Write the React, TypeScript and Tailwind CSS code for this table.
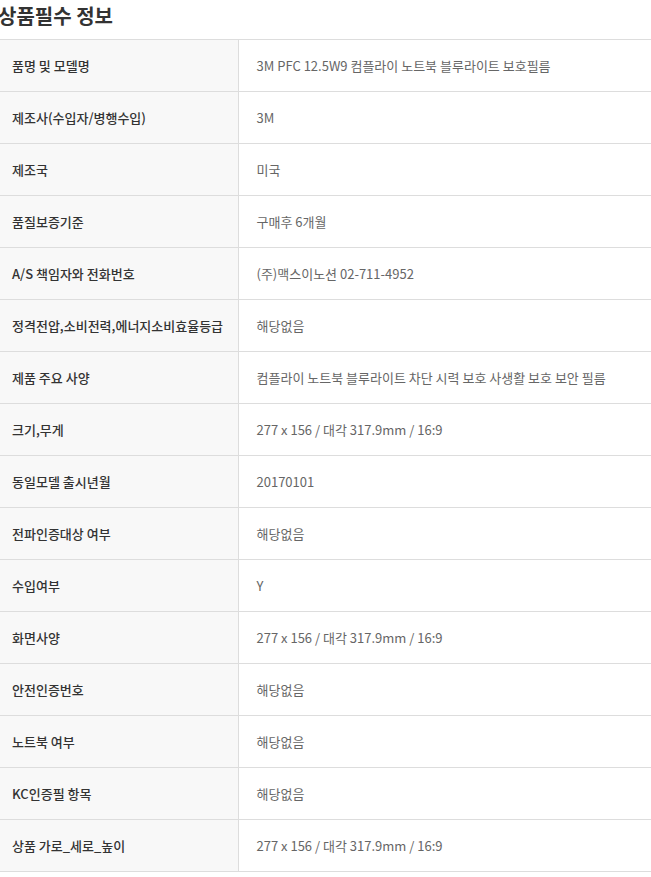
const rows: [string, string][] = [
  ['품명 및 모델명', '3M PFC 12.5W9 컴플라이 노트북 블루라이트 보호필름'],
  ['제조사(수입자/병행수입)', '3M'],
  ['제조국', '미국'],
  ['품질보증기준', '구매후 6개월'],
  ['A/S 책임자와 전화번호', '(주)맥스이노션 02-711-4952'],
  ['정격전압,소비전력,에너지소비효율등급', '해당없음'],
  ['제품 주요 사양', '컴플라이 노트북 블루라이트 차단 시력 보호 사생활 보호 보안 필름'],
  ['크기,무게', '277 x 156 / 대각 317.9mm / 16:9'],
  ['동일모델 출시년월', '20170101'],
  ['전파인증대상 여부', '해당없음'],
  ['수입여부', 'Y'],
  ['화면사양', '277 x 156 / 대각 317.9mm / 16:9'],
  ['안전인증번호', '해당없음'],
  ['노트북 여부', '해당없음'],
  ['KC인증필 항목', '해당없음'],
  ['상품 가로_세로_높이', '277 x 156 / 대각 317.9mm / 16:9'],
];

export default function App() {
  return (
    <div className="w-[651px] min-h-[877px] bg-white font-['Noto_Sans_CJK_KR','Noto_Sans',sans-serif]">
      <h2 className="h-[39px] pt-[1px] text-[20px] leading-[30px] font-bold text-[#333] -ml-[2px]">상품필수 정보</h2>
      <table className="w-full border-collapse border-t border-[#ddd]">
        <tbody>
          {rows.map(([label, value]) => (
            <tr key={label} className="h-[52px] border-b border-[#ddd]">
              <th className="w-[238px] bg-[#f8f8f8] border-r border-[#ddd] pl-[12px] text-left text-[13px] font-medium text-[#333] align-middle">
                {label}
              </th>
              <td className="pl-[18px] text-left text-[13px] text-[#666] align-middle">{value}</td>
            </tr>
          ))}
        </tbody>
      </table>
    </div>
  );
}
